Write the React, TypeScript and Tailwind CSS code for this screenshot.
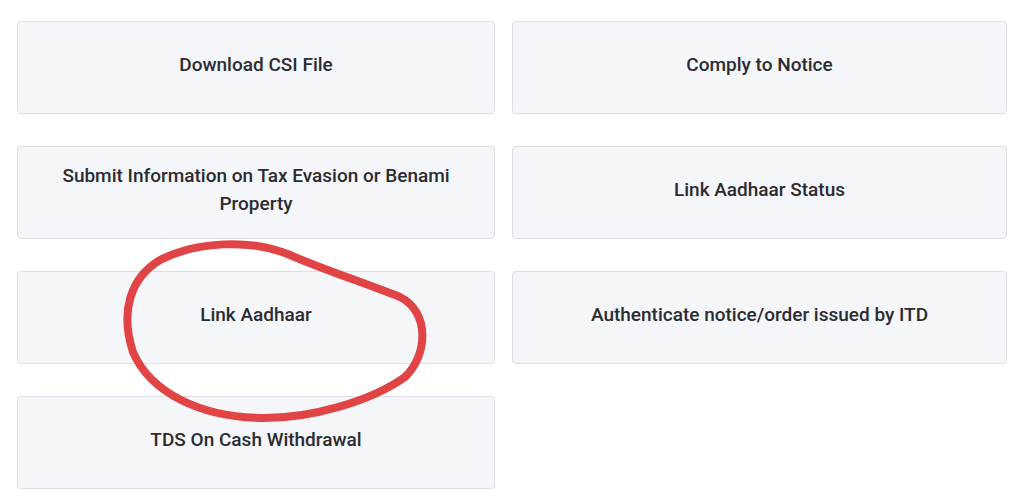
const items = [
  { label: 'Download CSI File' },
  { label: 'Comply to Notice' },
  { label: 'Submit Information on Tax Evasion or Benami Property' },
  { label: 'Link Aadhaar Status' },
  { label: 'Link Aadhaar' },
  { label: 'Authenticate notice/order issued by ITD' },
  { label: 'TDS On Cash Withdrawal' },
];

export default function App() {
  return (
    <div className="relative w-[1024px] h-[500px] bg-white overflow-hidden" style={{ fontFamily: 'Roboto, "Open Sans", sans-serif' }}>
      <div className="grid grid-cols-[478px_495px] gap-x-[17px] gap-y-[32px] pl-[17px] pt-[21px]">
        {items.map((item) => (
          <div
            key={item.label}
            className="h-[93px] flex items-center justify-center rounded-[4px] border border-[#dcdee4] bg-[#f5f6fa] px-10 pb-[6px]"
          >
            <span className="text-center text-[19px] leading-[28px] font-medium text-[#2a2c31]">
              {item.label}
            </span>
          </div>
        ))}
      </div>

      {/* hand-drawn marker circle */}
      <svg className="absolute left-0 top-0 pointer-events-none" width="1024" height="500">
        <path
          d="M 400 297 C 430 312, 428 355, 405 377 C 370 402, 310 418, 265 418 C 200 418, 150 392, 133 352 C 120 312, 130 278, 160 260 C 195 242, 250 238, 290 255 C 322 269, 362 282, 400 297 Z"
          fill="none"
          stroke="#e04444"
          strokeWidth={8}
          strokeLinecap="round"
          strokeLinejoin="round"
        />
      </svg>
    </div>
  );
}
